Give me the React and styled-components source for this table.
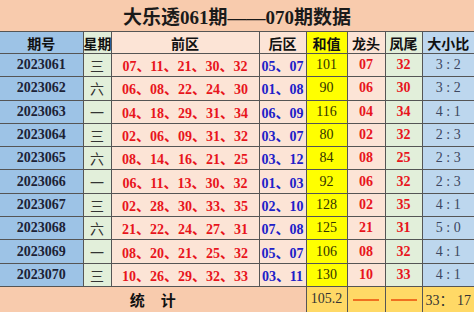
import React from "react";
import styled, { createGlobalStyle } from "styled-components";

const GlobalStyle = createGlobalStyle`
  html, body {
    margin: 0;
    padding: 0;
    background: #fff;
  }
  body {
    font-family: "Liberation Serif", "Noto Sans CJK SC", serif;
  }
`;

const cols = {
  no: "#9dc3e6",
  week: "#e2efda",
  front: "#fce4d6",
  back: "#fce4d6",
  sum: "#ffff00",
  head: "#fce4d6",
  tail: "#e2efda",
  ratio: "#bdd7ee",
};

const Table = styled.table`
  width: 474px;
  border-collapse: collapse;
  border-style: hidden;
  table-layout: fixed;
`;

const TitleCell = styled.th`
  height: 31px;
  padding: 0;
  background: #f8cbad;
  color: #1a1a1a;
  font-size: 19px;
  font-weight: 700;
  text-align: center;
  vertical-align: middle;
  border-bottom: 1px solid #555;
`;

const Th = styled.th`
  height: 21px;
  padding: 0;
  background: ${(p) => cols[p.$col]};
  border: 1px solid #555;
  color: #111;
  font-family: "Noto Sans CJK SC", sans-serif;
  font-size: 14px;
  font-weight: 700;
  text-align: center;
  white-space: nowrap;
  overflow: hidden;
  line-height: 20px;
`;

const Td = styled.td`
  height: 22.3px;
  padding: 0;
  background: ${(p) => cols[p.$col]};
  border: 1px solid #555;
  color: ${(p) => p.$color || "#222"};
  font-size: 14px;
  font-weight: ${(p) => (p.$bold ? 700 : 400)};
  text-align: center;
  white-space: nowrap;
  overflow: hidden;
`;

const FootCell = styled.td`
  height: 25px;
  padding: 0;
  background: ${(p) => p.$bg};
  border: 1px solid #555;
  color: #333;
  font-size: 14px;
  text-align: center;
  white-space: nowrap;
`;

const FootLabel = styled.span`
  font-family: "Noto Sans CJK SC", sans-serif;
  font-size: 15px;
  font-weight: 700;
  color: #111;
  letter-spacing: 16px;
  margin-right: -16px;
`;

const Dash = styled.span`
  display: inline-block;
  width: 26px;
  height: 2px;
  background: #f07020;
  vertical-align: middle;
`;

const rows = [
  ["2023061", "三", "07、11、21、30、32", "05、07", "101", "07", "32", "3 : 2"],
  ["2023062", "六", "06、08、22、24、30", "01、08", "90", "06", "30", "3 : 2"],
  ["2023063", "一", "04、18、29、31、34", "06、09", "116", "04", "34", "4 : 1"],
  ["2023064", "三", "02、06、09、31、32", "03、07", "80", "02", "32", "2 : 3"],
  ["2023065", "六", "08、14、16、21、25", "03、12", "84", "08", "25", "2 : 3"],
  ["2023066", "一", "06、11、13、30、32", "01、03", "92", "06", "32", "2 : 3"],
  ["2023067", "三", "02、28、30、33、35", "02、10", "128", "02", "35", "4 : 1"],
  ["2023068", "六", "21、22、24、27、31", "07、08", "125", "21", "31", "5 : 0"],
  ["2023069", "一", "08、20、21、25、32", "05、07", "106", "08", "32", "4 : 1"],
  ["2023070", "三", "10、26、29、32、33", "03、11", "130", "10", "33", "4 : 1"],
];

const widths = [83, 28, 148, 47, 41, 38, 37, 52];

export default function App() {
  return (
    <>
      <GlobalStyle />
      <Table>
        <colgroup>
          {widths.map((w, i) => (
            <col key={i} style={{ width: w }} />
          ))}
        </colgroup>
        <thead>
          <tr>
            <TitleCell colSpan={8}>大乐透061期——070期数据</TitleCell>
          </tr>
          <tr>
            <Th $col="no">期号</Th>
            <Th $col="week">星期</Th>
            <Th $col="front">前区</Th>
            <Th $col="back">后区</Th>
            <Th $col="sum">和值</Th>
            <Th $col="head">龙头</Th>
            <Th $col="tail">凤尾</Th>
            <Th $col="ratio">大小比</Th>
          </tr>
        </thead>
        <tbody>
          {rows.map((r) => (
            <tr key={r[0]}>
              <Td $col="no" $bold $color="#1c2236">{r[0]}</Td>
              <Td $col="week" $color="#333">{r[1]}</Td>
              <Td $col="front" $bold $color="#e8141c">{r[2]}</Td>
              <Td $col="back" $bold $color="#2020c8">{r[3]}</Td>
              <Td $col="sum" $color="#333300">{r[4]}</Td>
              <Td $col="head" $bold $color="#e8141c">{r[5]}</Td>
              <Td $col="tail" $bold $color="#e8141c">{r[6]}</Td>
              <Td $col="ratio" $color="#3c4660">{r[7]}</Td>
            </tr>
          ))}
          <tr>
            <FootCell colSpan={4} $bg="#f8cbad">
              <FootLabel>统计</FootLabel>
            </FootCell>
            <FootCell $bg="#ffd966">105.2</FootCell>
            <FootCell $bg="#ffd966"><Dash /></FootCell>
            <FootCell $bg="#ffd966"><Dash /></FootCell>
            <FootCell $bg="#ffd966">33： 17</FootCell>
          </tr>
        </tbody>
      </Table>
    </>
  );
}
